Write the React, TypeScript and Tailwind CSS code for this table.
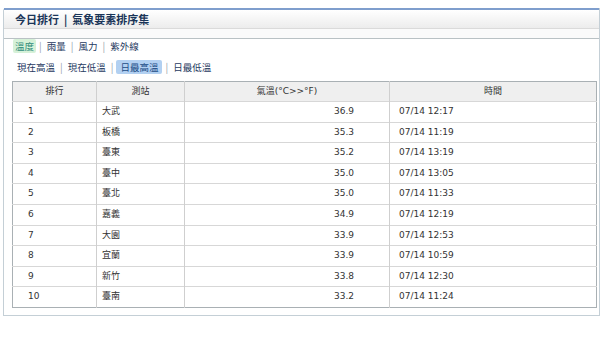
import React from "react";

const rows = [
  { rank: 1, station: "大武", temp: "36.9", time: "07/14 12:17" },
  { rank: 2, station: "板橋", temp: "35.3", time: "07/14 11:19" },
  { rank: 3, station: "臺東", temp: "35.2", time: "07/14 13:19" },
  { rank: 4, station: "臺中", temp: "35.0", time: "07/14 13:05" },
  { rank: 5, station: "臺北", temp: "35.0", time: "07/14 11:33" },
  { rank: 6, station: "嘉義", temp: "34.9", time: "07/14 12:19" },
  { rank: 7, station: "大園", temp: "33.9", time: "07/14 12:53" },
  { rank: 8, station: "宜蘭", temp: "33.9", time: "07/14 10:59" },
  { rank: 9, station: "新竹", temp: "33.8", time: "07/14 12:30" },
  { rank: 10, station: "臺南", temp: "33.2", time: "07/14 11:24" },
];

const elements = ["溫度", "雨量", "風力", "紫外線"];
const kinds = ["現在高溫", "現在低溫", "日最高溫", "日最低溫"];

function Sep() {
  return <span className="mx-[3px] text-[#9aa3ad] text-[10px] leading-none">|</span>;
}

function TabRow({
  items,
  active,
  activeClass,
}: {
  items: string[];
  active: number;
  activeClass: string;
}) {
  return (
    <div className="flex items-stretch">
      {items.map((label, i) => (
        <React.Fragment key={label}>
          {i > 0 && (
            <span className="flex items-center">
              <Sep />
            </span>
          )}
          <span
            className={
              "flex items-center px-[2px] rounded-[2px] " +
              (i === active ? activeClass : "text-[#1f3a5f]")
            }
          >
            {label}
          </span>
        </React.Fragment>
      ))}
    </div>
  );
}

export default function App() {
  return (
    <div className="w-[600px] h-[339px] overflow-hidden bg-white pt-[8px] pl-[3px] font-['DejaVu_Sans','Noto_Sans_CJK_TC',sans-serif]">
      <div className="w-[597px] border-l border-r border-b border-[#c4cfd6] rounded-tl-[3px] bg-[#fbfdfe]">
        {/* title bar */}
        <div className="h-[21px] border-t-2 border-[#7f9ecd] border-b border-b-[#dadada] bg-gradient-to-b from-white to-[#ececec] pl-[11px] flex items-center text-[11px] font-bold text-[#1a3558] font-['Noto_Sans_CJK_TC',sans-serif]">
          今日排行 <span className="mx-[5px]">|</span> 氣象要素排序集
        </div>
        <div className="h-[10px] bg-[#fafafa] border-b border-[#b9c1c4]" />

        <div className="bg-white pl-[9px] font-['Noto_Sans_CJK_TC',sans-serif] text-[9.5px]">
          <div className="h-[15px]">
            <TabRow
              items={elements}
              active={0}
              activeClass="bg-[#d6f1d8] text-[#2f8c7a]"
            />
          </div>
          <div className="h-[16px] mt-[6px] pl-[2px]">
            <TabRow
              items={kinds}
              active={2}
              activeClass="bg-[#b2d0f1] text-[#1b4c86] px-[4px]"
            />
          </div>
        </div>

        <div className="bg-white pt-[5px] pl-[8px] pb-[7px]">
          <table className="w-[584px] table-fixed border-collapse border border-[#a9b0b4] text-[9px] text-[#333]">
            <colgroup>
              <col className="w-[84px]" />
              <col className="w-[88px]" />
              <col className="w-[205px]" />
              <col className="w-[207px]" />
            </colgroup>
            <thead>
              <tr className="h-[20px] bg-[#efefef] border-b border-[#d7d7d7]">
                <th className="font-normal border-r border-[#cfcfcf]">排行</th>
                <th className="font-normal border-r border-[#cfcfcf]">測站</th>
                <th className="font-normal border-r border-[#cfcfcf]">氣溫(°C&gt;&gt;°F)</th>
                <th className="font-normal">時間</th>
              </tr>
            </thead>
            <tbody>
              {rows.map((r) => (
                <tr key={r.rank} className="h-[20.6px] border-t border-[#d7d7d7]">
                  <td className="pl-[15px] border-r border-[#cfcfcf]">{r.rank}</td>
                  <td className="pl-[5px] border-r border-[#cfcfcf]">{r.station}</td>
                  <td className="pr-[35px] text-right border-r border-[#cfcfcf]">{r.temp}</td>
                  <td className="pl-[9px]">{r.time}</td>
                </tr>
              ))}
            </tbody>
          </table>
        </div>
      </div>
    </div>
  );
}
